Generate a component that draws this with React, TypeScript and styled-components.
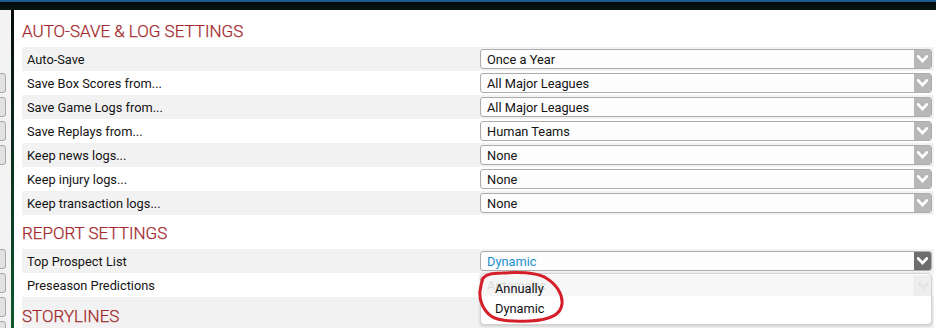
import styled, { createGlobalStyle } from "styled-components";

const GlobalStyle = createGlobalStyle`
  html, body {
    margin: 0;
    padding: 0;
    background: #ffffff;
    overflow: hidden;
  }
  body {
    font-family: Roboto, "Liberation Sans", sans-serif;
  }
`;

const Frame = styled.div`
  width: 936px;
  height: 328px;
  display: flex;
  flex-direction: column;
  overflow: hidden;
`;

const TopBar = styled.div`
  height: 10px;
  flex: none;
  background: linear-gradient(
    to bottom,
    #1d5a8c 0,
    #1d5a8c 2px,
    #03080a 2px,
    #071712 10px
  );
`;

const Body = styled.div`
  flex: 1;
  display: flex;
  min-height: 0;
`;

const SideStrip = styled.div`
  width: 11px;
  flex: none;
  background: #f3f3f3;
  overflow: hidden;
  display: flex;
  flex-direction: column;
  padding-top: 63px;
`;

const SideGroup = styled.div<{ $gapBefore?: number }>`
  display: flex;
  flex-direction: column;
  gap: 4px;
  flex: none;
  margin-top: ${({ $gapBefore }) => $gapBefore ?? 0}px;
`;

const SideTab = styled.div`
  width: 20px;
  height: 18px;
  flex: none;
  margin-left: -16px;
  border: 1px solid #a9a9a9;
  border-radius: 3px;
  background: #e2e2e2;
`;

const Divider = styled.div`
  width: 3px;
  flex: none;
  background: linear-gradient(to bottom, #060b0b 0%, #0b2a1c 40%, #0d5a2c 100%);
`;

const Content = styled.div`
  flex: 1;
  padding: 0 2px 0 8px;
  display: flex;
  flex-direction: column;
  overflow: hidden;
`;

const SectionHeader = styled.div<{ $top: number; $height: number; $shaded?: boolean }>`
  flex: none;
  height: ${({ $height }) => $height}px;
  box-sizing: border-box;
  padding-top: ${({ $top }) => $top}px;
  line-height: 20px;
  font-size: 17px;
  font-weight: 300;
  color: #a3282b;
  -webkit-text-stroke: 0.25px #a3282b;
  background: ${({ $shaded }) => ($shaded ? "#f2f2f2" : "transparent")};
`;

const Row = styled.div<{ $shaded?: boolean }>`
  flex: none;
  height: 24px;
  display: grid;
  grid-template-columns: 1fr 454px;
  align-items: center;
  background: ${({ $shaded }) => ($shaded ? "#f2f2f2" : "#ffffff")};
  position: relative;
`;

const Label = styled.div`
  padding-left: 5px;
  font-size: 12.8px;
  color: #141414;
`;

const Select = styled.div<{ $active?: boolean }>`
  height: 20px;
  margin-right: 2px;
  box-sizing: border-box;
  border: 1px solid #acacac;
  border-radius: 3px;
  background: #fdfdfd;
  display: flex;
  align-items: center;
  font-size: 12.8px;
  color: ${({ $active }) => ($active ? "#1b8fd2" : "#141414")};
  overflow: hidden;
`;

const SelectValue = styled.span`
  flex: 1;
  padding-left: 6px;
`;

const ArrowBox = styled.div<{ $active?: boolean }>`
  width: 17px;
  height: 100%;
  background: ${({ $active }) => ($active ? "#6e6e6e" : "#b7b7b7")};
  display: flex;
  align-items: center;
  justify-content: center;
`;

const Popup = styled.div`
  position: absolute;
  right: 2px;
  top: 0;
  width: 452px;
  height: 52px;
  box-sizing: border-box;
  border: 1px solid #d2d2d2;
  border-radius: 4px;
  background: #ffffff;
  box-shadow: 0 1px 3px rgba(0, 0, 0, 0.18);
  z-index: 2;
`;

const Ghost = styled.div`
  position: absolute;
  left: 0;
  right: 0;
  top: 1px;
  height: 21px;
  display: flex;
  align-items: center;
  background: #f6f6f6;
  color: #dcdcdc;
  font-size: 12.8px;
  border-radius: 3px;
`;

const GhostArrow = styled.div`
  width: 16px;
  height: 100%;
  background: #eeeeee;
  border-left: 1px solid #e8e8e8;
  display: flex;
  align-items: center;
  justify-content: center;
`;

const OptionList = styled.div`
  position: relative;
  padding-top: 5px;
  display: flex;
  flex-direction: column;
`;

const Option = styled.div`
  line-height: 20px;
  padding-left: 14px;
  font-size: 12.8px;
  color: #111111;
`;

const Scribble = styled.svg`
  position: absolute;
  left: -3px;
  top: -2px;
  overflow: visible;
  pointer-events: none;
`;

const Chevron = ({ color = "#ffffff" }: { color?: string }) => (
  <svg width="11" height="8" viewBox="0 0 11 8">
    <path d="M1.2 1.5 L5.5 6 L9.8 1.5" fill="none" stroke={color} strokeWidth="2.6" strokeLinecap="square" />
  </svg>
);

type Setting = { label: string; value: string };

const autoSave: Setting[] = [
  { label: "Auto-Save", value: "Once a Year" },
  { label: "Save Box Scores from...", value: "All Major Leagues" },
  { label: "Save Game Logs from...", value: "All Major Leagues" },
  { label: "Save Replays from...", value: "Human Teams" },
  { label: "Keep news logs...", value: "None" },
  { label: "Keep injury logs...", value: "None" },
  { label: "Keep transaction logs...", value: "None" },
];

function SelectBox({ value, active }: { value: string; active?: boolean }) {
  return (
    <Select $active={active}>
      <SelectValue>{value}</SelectValue>
      <ArrowBox $active={active}>
        <Chevron />
      </ArrowBox>
    </Select>
  );
}

export default function App() {
  return (
    <Frame>
      <GlobalStyle />
      <TopBar />
      <Body>
        <SideStrip>
          <SideGroup>
            <SideTab />
            <SideTab />
            <SideTab />
            <SideTab />
          </SideGroup>
          <SideGroup $gapBefore={84}>
            <SideTab />
            <SideTab />
            <SideTab />
            <SideTab />
          </SideGroup>
        </SideStrip>
        <Divider />
        <Content>
          <SectionHeader $top={11} $height={37}>
            AUTO-SAVE &amp; LOG SETTINGS
          </SectionHeader>
          {autoSave.map((s, i) => (
            <Row key={s.label} $shaded={i % 2 === 0}>
              <Label>{s.label}</Label>
              <SelectBox value={s.value} />
            </Row>
          ))}

          <SectionHeader $top={8} $height={34}>
            REPORT SETTINGS
          </SectionHeader>
          <Row $shaded>
            <Label>Top Prospect List</Label>
            <SelectBox value="Dynamic" active />
          </Row>
          <Row>
            <Label>Preseason Predictions</Label>
            <div />
            <Popup>
              <Ghost>
                <SelectValue>Automatic</SelectValue>
                <GhostArrow>
                  <Chevron color="#e4e4e4" />
                </GhostArrow>
              </Ghost>
              <OptionList>
                <Option>Annually</Option>
                <Option>Dynamic</Option>
              </OptionList>
              <Scribble width="90" height="52" viewBox="0 0 90 52">
                <path
                  d="M4 8 C6 3, 12 1, 24 1 C42 0, 60 1, 68 6 C78 12, 85 22, 84 32 C83 42, 72 48, 52 49 C34 50, 20 49, 13 44 C5 38, 1 28, 2 19 C3 12, 4 9, 5 6"
                  fill="none"
                  stroke="#d41f2a"
                  strokeWidth="3"
                  strokeLinecap="round"
                  strokeLinejoin="round"
                />
              </Scribble>
            </Popup>
          </Row>
          <SectionHeader $top={9} $height={36} $shaded>
            STORYLINES
          </SectionHeader>
        </Content>
      </Body>
    </Frame>
  );
}
